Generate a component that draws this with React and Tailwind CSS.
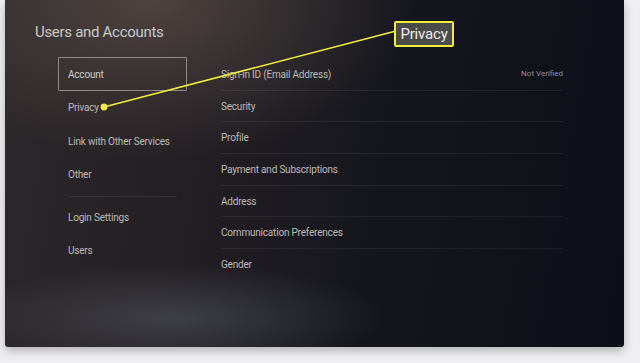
const leftItems = [
  { label: "Account", selected: true },
  { label: "Privacy" },
  { label: "Link with Other Services" },
  { label: "Other" },
];

const leftItems2 = ["Login Settings", "Users"];

const rightItems = [
  { label: "Sign-in ID (Email Address)", value: "Not Verified" },
  { label: "Security" },
  { label: "Profile" },
  { label: "Payment and Subscriptions" },
  { label: "Address" },
  { label: "Communication Preferences" },
  { label: "Gender", last: true },
];

function Callout() {
  return (
    <>
      <svg
        className="absolute inset-0 pointer-events-none"
        width="640"
        height="363"
        viewBox="0 0 640 363"
      >
        <line x1="104" y1="107" x2="396" y2="31" stroke="#f2ec3c" strokeWidth="1.6" />
        <circle cx="104" cy="107" r="3.4" fill="#f2ec3c" />
      </svg>
      <div className="absolute left-[394px] top-[21px] w-[60px] h-[26px] rounded-[2px] border-2 border-[#f2ec3c] bg-[#4a4a4a] flex items-center justify-center">
        <span className="text-[15px] text-[#ececec] leading-none tracking-[-0.2px]">Privacy</span>
      </div>
    </>
  );
}

export default function App() {
  return (
    <div className="relative w-[640px] h-[363px] bg-[#efeff1] overflow-hidden font-['Roboto',sans-serif]">
      <div className="ml-[5px] w-[619px] h-[347px] rounded-b-[3px] shadow-[0_4px_10px_rgba(0,0,0,0.25)] bg-[image:radial-gradient(ellipse_210px_55px_at_170px_318px,rgba(90,95,106,0.5),transparent),radial-gradient(ellipse_260px_160px_at_150px_0px,rgba(115,100,88,0.5),transparent),linear-gradient(100deg,#2d282a_0%,#241f24_30%,#15161d_60%,#0c0f18_100%)] pt-[21px] pl-[30px]">
        <h1 className="text-[15px] leading-[22px] text-[#cac8c7] tracking-[-0.3px]">
          Users and Accounts
        </h1>
        <div className="flex mt-[14px]">
          <div className="ml-[23px] w-[129px]">
            {leftItems.map((it) =>
              it.selected ? (
                <div
                  key={it.label}
                  className="h-[34px] border border-[#8e8a8a] rounded-[1px] flex items-center pl-[9px] text-[10px] tracking-[-0.2px] text-[#cfcccc]"
                >
                  {it.label}
                </div>
              ) : (
                <div
                  key={it.label}
                  className="h-[33.5px] flex items-center pl-[10px] text-[10px] tracking-[-0.2px] text-[#bdbab9]"
                >
                  {it.label}
                </div>
              )
            )}
            <div className="mx-[10px] mt-[4px] mb-[4px] h-px bg-[rgba(255,255,255,0.08)]" />
            {leftItems2.map((l) => (
              <div
                key={l}
                className="h-[33.5px] flex items-center pl-[10px] text-[10px] tracking-[-0.2px] text-[#bdbab9]"
              >
                {l}
              </div>
            ))}
          </div>
          <div className="ml-[34px] mt-[2px] w-[342px]">
            {rightItems.map((it) => (
              <div
                key={it.label}
                className={
                  "h-[31.7px] flex items-center justify-between " +
                  (it.last ? "" : "border-b border-[rgba(255,255,255,0.07)]")
                }
              >
                <span className="text-[10px] tracking-[-0.2px] text-[#bdbab9]">{it.label}</span>
                {it.value && (
                  <span className="text-[8px] text-[#8f8f95]">{it.value}</span>
                )}
              </div>
            ))}
          </div>
        </div>
      </div>
      <Callout />
    </div>
  );
}
